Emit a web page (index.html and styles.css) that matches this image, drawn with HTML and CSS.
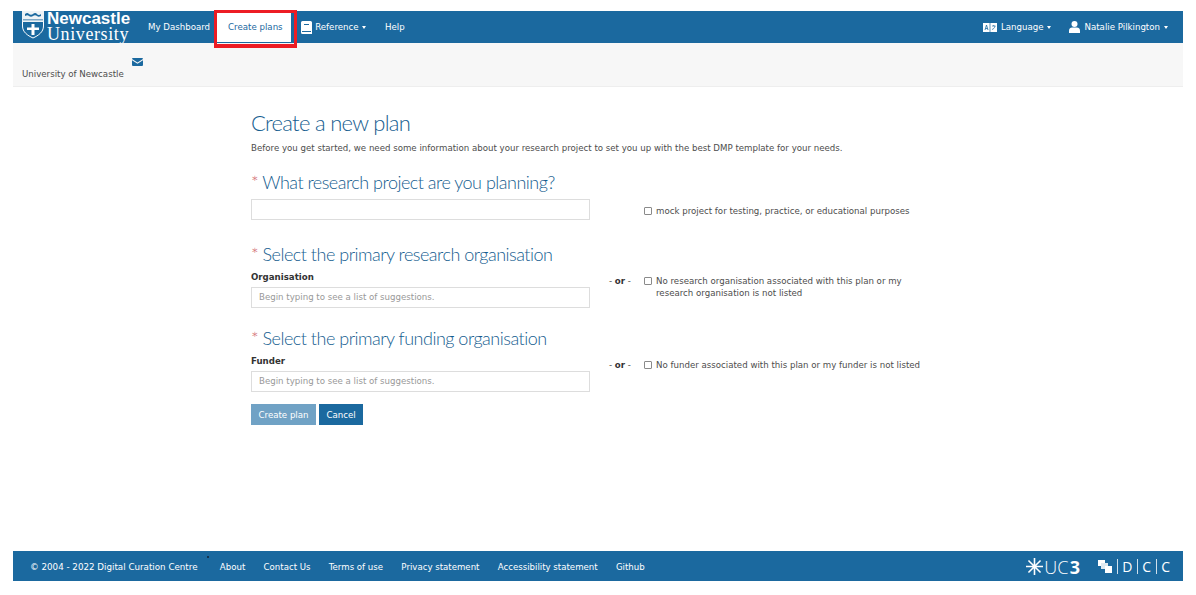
FILE: index.html

```html
<!DOCTYPE html>
<html lang="en">
<head>
  <meta charset="UTF-8" />
  <title>Create a new plan</title>
  <link rel="stylesheet" href="styles.css">
</head>
<body>
  <div class="page">
    <nav class="navbar">
      <a class="logo" href="#">
        <svg class="shield" width="22" height="28" viewBox="0 0 22 28">
          <path d="M.5 1h21v14c0 6-5 9.500-10.500 12C5.500 24.500.5 21 .5 15z" fill="none" stroke="#fff"/>
          <path d="M0 0h22v11H0z" fill="#eef3f6"/>
          <path d="M3 3c2-1.500 3-1 4 0s3 1 4 0 3-1.500 4 0 3 1 4 0v2c-2 1-3 1-4 0s-3-1-4 0-3 1-4 0-2-1-4 0z" fill="#1b699f"/>
          <path d="M1 8h20v1.500H1z" fill="#7fa9c6"/>
          <path d="M9.500 13h3v3.500H17v2.500h-4.500v5h-3v-5H5v-2.500h4.500z" fill="#fff"/>
        </svg>
        <span class="logo-text">
          <span class="logo-top">Newcastle</span>
          <span class="logo-bottom">University</span>
        </span>
      </a>
      <ul class="nav-left">
        <li><a href="#">My Dashboard</a></li>
        <li class="active"><a href="#">Create plans</a><span class="marker"></span></li>
        <li class="has-icon"><a href="#">
          <svg width="11" height="13" viewBox="0 0 11 13"><path d="M1.500 0h8A1.500 1.500 0 0 1 11 1.500V13H1.500A1.500 1.500 0 0 1 0 11.500v-10A1.500 1.500 0 0 1 1.500 0z" fill="#fff"/><path d="M1 10.500h9" stroke="#1b699f"/><path d="M3 3h5v1H3z" fill="#1b699f"/></svg>
          <span>Reference</span> <span class="caret"></span></a></li>
        <li><a href="#">Help</a></li>
      </ul>
      <ul class="nav-right">
        <li><a href="#">
          <svg width="14" height="9" viewBox="0 0 14 9"><path d="M0 0h14v9H0z" fill="#fff"/><path d="M2 7l1.500-5 1.500 5M2.500 5.500h2" stroke="#1b699f" fill="none" stroke-width=".8"/><path d="M7 0v9" stroke="#1b699f" stroke-width=".7"/><path d="M9 3h3.500M10.700 2v1M12 3c-.3 2-1.500 3-3 3.500" stroke="#1b699f" fill="none" stroke-width=".7"/></svg>
          <span>Language</span> <span class="caret"></span></a></li>
        <li><a href="#">
          <svg width="11" height="12" viewBox="0 0 11 12"><circle cx="5.500" cy="3" r="3" fill="#fff"/><path d="M0 12V9.500C0 7.500 1.500 6.500 3 6.500h5c1.500 0 3 1 3 3V12z" fill="#fff"/></svg>
          <span>Natalie Pilkington</span> <span class="caret"></span></a></li>
      </ul>
    </nav>

    <div class="org-bar">
      <span class="org-name">University of Newcastle</span>
      <svg class="mail" width="11" height="8" viewBox="0 0 11 8"><path d="M1 0h9a1 1 0 0 1 1 1L5.500 4.500 0 1a1 1 0 0 1 1-1z" fill="#1b699f"/><path d="M0 2.300l5.500 3.500L11 2.300V7a1 1 0 0 1-1 1H1a1 1 0 0 1-1-1z" fill="#1b699f"/></svg>
    </div>

    <main class="content">
      <h1>Create a new plan</h1>
      <p class="intro">Before you get started, we need some information about your research project to set you up with the best DMP template for your needs.</p>

      <h2><span class="req">*</span> What research project are you planning?</h2>
      <div class="row row-project">
        <input class="field" type="text" />
        <span class="or"></span>
        <label class="check"><input type="checkbox" /><span>mock project for testing, practice, or educational purposes</span></label>
      </div>

      <h2 class="gap-org"><span class="req">*</span> Select the primary research organisation</h2>
      <div class="row">
        <div class="col">
          <label class="name">Organisation</label>
          <input class="field" type="text" placeholder="Begin typing to see a list of suggestions." />
        </div>
        <span class="or">- <b>or</b> -</span>
        <label class="check"><input type="checkbox" /><span>No research organisation associated with this plan or my research organisation is not listed</span></label>
      </div>

      <h2 class="gap-fund"><span class="req">*</span> Select the primary funding organisation</h2>
      <div class="row">
        <div class="col">
          <label class="name">Funder</label>
          <input class="field" type="text" placeholder="Begin typing to see a list of suggestions." />
        </div>
        <span class="or">- <b>or</b> -</span>
        <label class="check"><input type="checkbox" /><span>No funder associated with this plan or my funder is not listed</span></label>
      </div>

      <div class="actions">
        <button class="btn btn-off">Create plan</button>
        <button class="btn">Cancel</button>
      </div>
    </main>

    <footer class="footer">
      <span class="copy">© 2004 - 2022 Digital Curation Centre</span>
      <a href="#">About</a>
      <a href="#">Contact Us</a>
      <a href="#">Terms of use</a>
      <a href="#">Privacy statement</a>
      <a href="#">Accessibility statement</a>
      <a href="#">Github</a>
      <span class="brands">
        <span class="uc3"><svg width="17" height="17" viewBox="0 0 16 16"><path d="M8 0v16M0 8h16M2.300 2.300l11.400 11.400M13.700 2.300L2.300 13.700" stroke="#fff" stroke-width="1.500" fill="none"/></svg>UC<b>3</b></span>
        <span class="dcc"><svg width="14" height="13" viewBox="0 0 14 13"><path d="M0 0h7v6H0z" fill="#fff"/><path d="M3 3h7v6H3z" fill="#dfe9f0"/><path d="M7 6h7v7H7z" fill="#fff"/></svg><i></i>D<i></i>C<i></i>C</span>
      </span>
    </footer>
  </div>
</body>
</html>
```

FILE: styles.css

```css
* {
  box-sizing: border-box;
}
body {
  margin: 0;
  padding: 11px 13px 14px;
  background-color: #fff;
  color: #4d4d4d;
  font-family: "DejaVu Sans", Verdana, sans-serif;
  font-size: 8.650px;
}
a {
  color: inherit;
  text-decoration: none;
}
ul {
  list-style: none;
  margin: 0;
  padding: 0;
}
.page {
  height: 570px;
  display: flex;
  flex-direction: column;
}

/* top bar */
.navbar {
  display: flex;
  align-items: stretch;
  height: 32px;
  background-color: #1b699f;
  color: #fff;
}
.logo {
  display: flex;
  align-items: flex-start;
  gap: 3px;
  width: 127px;
  padding-left: 9px;
}
.shield {
  flex: none;
}
.logo-text {
  display: flex;
  flex-direction: column;
}
.logo-top {
  font-family: "Liberation Sans", Arial, sans-serif;
  font-size: 17px;
  font-weight: bold;
  line-height: 15px;
}
.logo-bottom {
  font-family: "Liberation Serif", "Times New Roman", serif;
  font-size: 18px;
  line-height: 16px;
  letter-spacing: .6px;
}
.nav-left, .nav-right {
  display: flex;
  align-items: stretch;
}
.nav-right {
  margin-left: auto;
  padding-right: 15px;
  gap: 18px;
}
.nav-left li, .nav-right li {
  position: relative;
  display: flex;
  align-items: center;
}
.nav-left li a, .nav-right li a {
  display: flex;
  align-items: center;
  gap: 4px;
  height: 100%;
  white-space: nowrap;
}
.nav-left li a {
  padding: 0 7px 0 8px;
}
.nav-left li.has-icon a {
  gap: 3.500px;
  padding: 0 11px 0 9.500px;
}
.nav-left li.active {
  background-color: #fff;
  color: #1b699f;
  box-shadow: inset 0 -1px 0 #1b699f;
}
.nav-left li.active a {
  padding: 0 8.500px 0 11px;
}
.marker {
  position: absolute;
  left: -3px;
  right: -6px;
  top: -1px;
  bottom: -5px;
  border: 3px solid #ed1c24;
  border-bottom-width: 4px;
  pointer-events: none;
}
.caret {
  display: inline-block;
  width: 0;
  height: 0;
  border-top: 3px solid #fff;
  border-left: 2.500px solid transparent;
  border-right: 2.500px solid transparent;
}

/* organisation bar */
.org-bar {
  display: flex;
  height: 44px;
  background-color: #f7f7f7;
  border-bottom: 1px solid #eee;
  padding: 27px 0 0 9px;
  line-height: 9px;
}
.org-name {
  white-space: nowrap;
}
.mail {
  margin: -12px 0 0 8px;
}

/* form */
.content {
  flex: 1;
  padding: 0 0 0 238px;
}
h1, h2 {
  margin: 0;
  color: #155d8f;
  font-family: Lato, "Open Sans", sans-serif;
  font-weight: 300;
}
h1 {
  margin-top: 22px;
  font-size: 22px;
  line-height: 27px;
  letter-spacing: -.7px;
}
h2 {
  font-size: 18px;
  line-height: 22px;
  letter-spacing: -.5px;
}
.req {
  color: #d0656c;
}
.intro {
  margin: 6px 0 17px;
  line-height: 12px;
}
.row {
  display: flex;
  align-items: flex-start;
}
.row-project {
  margin-top: 6px;
}
.gap-org {
  margin-top: 23px;
}
.gap-fund {
  margin-top: 19px;
}
.col {
  width: 339px;
  flex: none;
  margin-top: 7px;
}
.name {
  display: block;
  margin-bottom: 4px;
  font-weight: bold;
  line-height: 11px;
  color: #333;
}
.field {
  display: block;
  width: 339px;
  height: 21px;
  padding: 0 7px 1px;
  flex: none;
  border: 1px solid #ddd;
  background-color: #fff;
  font-family: inherit;
  font-size: 8.650px;
}
.field::placeholder {
  color: #999;
}
.or {
  width: 54px;
  flex: none;
  padding: 10px 0 0 19px;
  line-height: 12px;
  white-space: nowrap;
}
.or b {
  color: #333;
}
.check {
  display: flex;
  align-items: flex-start;
  width: 278px;
  padding-top: 10px;
  line-height: 12px;
}
.row-project .or, .row-project .check {
  padding-top: 0;
}
.row-project .check {
  margin-top: 6px;
}
.check input {
  flex: none;
  appearance: none;
  width: 8px;
  height: 8px;
  margin: 2px 4px 0 0;
  border: 1px solid #8a8a8a;
  border-radius: 1px;
  background-color: #fff;
}
.actions {
  display: flex;
  gap: 3px;
  margin-top: 12px;
}
.btn {
  height: 21px;
  padding: 0 6.500px;
  border: 1px solid #1b699f;
  background-color: #1b699f;
  color: #fff;
  font-family: inherit;
  font-size: 8.650px;
}
.btn-off {
  background-color: #70a2c5;
  border-color: #70a2c5;
}

/* footer */
.footer {
  position: relative;
  display: flex;
  align-items: center;
  gap: 18.300px;
  height: 30px;
  padding: 1px 13px 0 17px;
  background-color: #1b699f;
  color: #fff;
  font-size: 8.600px;
  white-space: nowrap;
}
.copy {
  margin-right: 4px;
  font-size: 8.720px;
}
.copy::after {
  content: "";
  position: absolute;
  left: 194px;
  top: 5px;
  width: 2px;
  height: 2px;
  border-radius: 50%;
  background-color: #123;
}
.brands {
  display: flex;
  align-items: center;
  gap: 18px;
  margin-left: auto;
}
.uc3 {
  display: flex;
  align-items: center;
  gap: 1px;
  font-family: "Open Sans", sans-serif;
  font-size: 18px;
  font-weight: 300;
  letter-spacing: .2px;
}
.uc3 b {
  font-weight: 700;
}
.dcc {
  display: flex;
  align-items: center;
  gap: 4.500px;
  font-family: "Open Sans", sans-serif;
  font-size: 14px;
}
.dcc i {
  width: 1px;
  height: 15px;
  background-color: #cfe0ec;
}
```
